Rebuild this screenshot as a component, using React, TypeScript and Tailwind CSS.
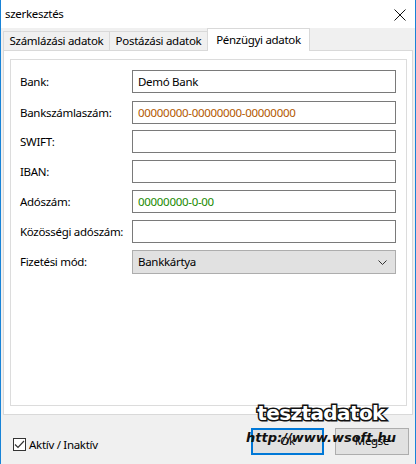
import React from "react";

type Row = {
  label: string;
  value?: string;
  color?: string;
  mt: string;
};

const rows: Row[] = [
  { label: "Bank:", value: "Demó Bank", color: "text-black", mt: "mt-0" },
  { label: "Bankszámlaszám:", value: "00000000-00000000-00000000", color: "text-[#b35900]", mt: "mt-[8px]" },
  { label: "SWIFT:", mt: "mt-[6px]" },
  { label: "IBAN:", mt: "mt-[7px]" },
  { label: "Adószám:", value: "00000000-0-00", color: "text-[#1a8a00]", mt: "mt-[7px]" },
  { label: "Közösségi adószám:", mt: "mt-[7px]" },
];

const Tab = ({ text, w, active }: { text: string; w: string; active?: boolean }) =>
  active ? (
    <div className={`${w} h-[23px] -mb-px z-10 bg-white border border-b-0 border-[#d9d9d9] flex items-center justify-center whitespace-nowrap`}>
      {text}
    </div>
  ) : (
    <div className={`${w} h-[19px] bg-[#f0f0f0] border border-b-0 border-[#d9d9d9] -mr-px flex items-center justify-center whitespace-nowrap`}>
      {text}
    </div>
  );

export default function App() {
  return (
    <div className="w-[416px] h-[464px] bg-[#f0f0f0] border-x border-[#1883d7] flex flex-col relative overflow-hidden font-['Noto_Sans',sans-serif] text-[11.5px] tracking-[-0.3px] text-black">
      {/* title bar */}
      <div className="h-[28px] bg-white flex items-center justify-between pl-[4px] pr-[9px] shrink-0">
        <span className="-mt-[1px]">szerkesztés</span>
        <svg width="12" height="12" viewBox="0 0 12 12" className="mt-[1px]">
          <path d="M0.5 0.5 L11.5 11.5 M11.5 0.5 L0.5 11.5" stroke="#111" strokeWidth="1" />
        </svg>
      </div>

      {/* tabs */}
      <div className="h-[22px] flex items-end pl-[2px] shrink-0 relative">
        <Tab text="Számlázási adatok" w="w-[107px]" />
        <Tab text="Postázási adatok" w="w-[99px]" />
        <Tab text="Pénzügyi adatok" w="w-[103px]" active />
      </div>

      {/* tab panel */}
      <div className="mx-[2px] h-[365px] bg-white border border-[#d9d9d9] pt-[8px] pl-[6px] pr-[5px] pb-[8px] shrink-0">
        <div className="h-full border border-[#dcdcdc] pt-[10px] pl-[9px] pr-[10px]">
          {rows.map((r) => (
            <div key={r.label} className={`flex items-center h-[23px] ${r.mt}`}>
              <span className="w-[112px] shrink-0 leading-none whitespace-nowrap">{r.label}</span>
              <div
                className={`w-[264px] h-[23px] border border-[#7a7a7a] bg-white flex items-center pl-[5px] leading-none ${r.color ?? ""}`}
              >
                {r.value}
              </div>
            </div>
          ))}
          <div className="flex items-center h-[24px] mt-[7px]">
            <span className="w-[112px] shrink-0 leading-none whitespace-nowrap">Fizetési mód:</span>
            <div className="w-[264px] h-[24px] border border-[#adadad] bg-[#e1e1e1] flex items-center justify-between pl-[5px] pr-[8px] leading-none">
              <span>Bankkártya</span>
              <svg width="9" height="5" viewBox="0 0 9 5">
                <path d="M0.5 0.5 L4.5 4.5 L8.5 0.5" stroke="#333" fill="none" strokeWidth="1" />
              </svg>
            </div>
          </div>
        </div>
      </div>

      {/* bottom bar */}
      <div className="flex-1 flex items-center pl-[12px] pr-[6px] relative">
        <div className="flex items-center gap-[3px] mt-[10px]">
          <div className="w-[13px] h-[13px] border border-[#333] bg-white flex items-center justify-center">
            <svg width="11" height="9" viewBox="0 0 11 9">
              <path d="M1 4.5 L4 7.5 L10 1" stroke="#333" fill="none" strokeWidth="1.2" />
            </svg>
          </div>
          <span className="leading-none">Aktív / Inaktív</span>
        </div>
        <div className="ml-auto flex gap-[11px] mt-[3px]">
          <div className="w-[73px] h-[27px] border-2 border-[#0078d7] bg-[#e1e1e1] flex items-center justify-center leading-none">
            Ok
          </div>
          <div className="w-[74px] h-[27px] border border-[#adadad] bg-[#e1e1e1] flex items-center justify-center leading-none">
            Mégse
          </div>
        </div>
      </div>

      {/* watermark */}
      <div className="absolute left-[246px] top-[403px] w-[148px] flex flex-col items-center pointer-events-none tracking-normal">
        <span className="font-['DejaVu_Sans',sans-serif] font-bold text-[20px] tracking-[-0.6px] leading-none text-white [-webkit-text-stroke:3px_#111] [paint-order:stroke_fill]">
          tesztadatok
        </span>
        <span className="font-['DejaVu_Sans',sans-serif] font-bold italic text-[13px] leading-none text-[#111] mt-[8px]">
          http://www.wsoft.hu
        </span>
      </div>
    </div>
  );
}
